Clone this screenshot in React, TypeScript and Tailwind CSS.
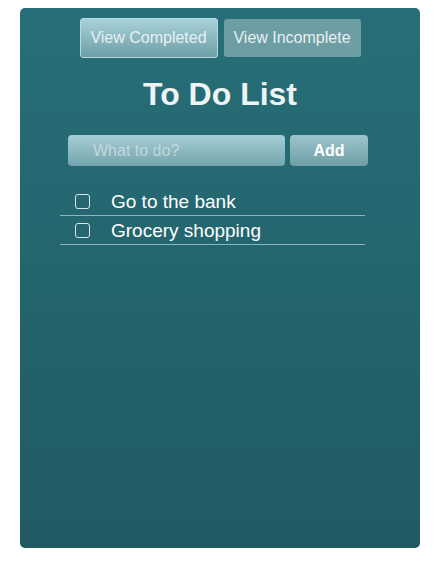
import React from "react";

export default function App() {
  const items = ["Go to the bank", "Grocery shopping"];
  return (
    <div
      className="w-[442px] h-[562px] bg-white pt-[8px] pl-[20px]"
      style={{ fontFamily: '"Liberation Sans", Arial, sans-serif' }}
    >
      <div className="w-[400px] h-[540px] rounded-[5px] bg-gradient-to-b from-[#276f78] to-[#215a63] flex flex-col items-center">
        <div className="flex items-center gap-[6px] mt-[10px]">
          <button className="w-[138px] h-[40px] rounded-[3px] border border-[#b5dbe1] bg-gradient-to-b from-[#a8d2da] to-[#6d9fa6] text-[16px] text-[#e8f0f1] leading-none">
            View Completed
          </button>
          <button className="w-[137px] h-[38px] rounded-[3px] bg-[#6c9ea4] text-[16px] text-[#e8f0f1] leading-none">
            View Incomplete
          </button>
        </div>
        <h1 className="mt-[20px] text-[32px] font-bold text-[#eef3f4] leading-none">To Do List</h1>
        <div className="flex items-center gap-[5px] mt-[25px] mr-[4px]">
          <div className="w-[217px] h-[31px] rounded-[4px] bg-gradient-to-b from-[#a5ced6] to-[#74a5ac] flex items-center pl-[25px]">
            <span className="text-[16px] text-[#c2d8db] leading-none">What to do?</span>
          </div>
          <button className="w-[78px] h-[31px] rounded-[4px] bg-gradient-to-b from-[#9cc6ce] to-[#6f9ea5] text-[16px] font-bold text-white leading-none">
            Add
          </button>
        </div>
        <div className="self-start ml-[40px] mt-[21px] w-[305px] flex flex-col">
          {items.map((t) => (
            <div key={t} className="h-[29px] flex items-center border-b border-[#8ab6bc]">
              <span className="ml-[15px] w-[15px] h-[15px] rounded-[3px] border border-[#dbe8ea]" />
              <span className="ml-[21px] text-[19px] text-white leading-none">{t}</span>
            </div>
          ))}
        </div>
      </div>
    </div>
  );
}
